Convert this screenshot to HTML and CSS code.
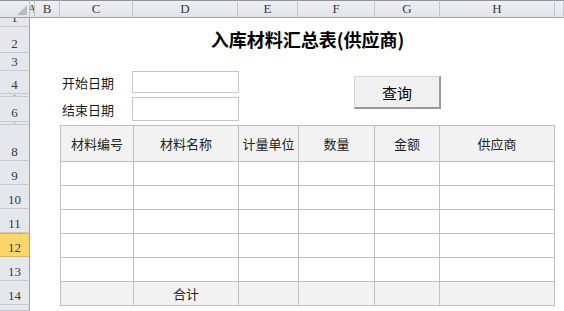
FILE: index.html
```html
<!DOCTYPE html>
<html lang="zh-CN">
<head>
    <meta charset="UTF-8">
    <meta name="viewport" content="width=device-width, initial-scale=1.0">
    <title>入库材料汇总表(供应商)</title>
    <link rel="stylesheet" href="styles.css">
</head>
<body>
    <div class="sheet">
        <div class="corner">
            <svg width="10" height="10" viewBox="0 0 10 10"><polygon points="10,0 10,10 0,10"/></svg>
        </div>
        <div class="col-head">A</div>
        <div class="col-head">B</div>
        <div class="col-head">C</div>
        <div class="col-head">D</div>
        <div class="col-head">E</div>
        <div class="col-head">F</div>
        <div class="col-head">G</div>
        <div class="col-head">H</div>
        <div class="col-head"></div>

        <div class="row-head">1</div>
        <div class="row-head">2</div>
        <div class="row-head">3</div>
        <div class="row-head">4</div>
        <div class="row-head tiny">5</div>
        <div class="row-head">6</div>
        <div class="row-head tiny">7</div>
        <div class="row-head">8</div>
        <div class="row-head">9</div>
        <div class="row-head">10</div>
        <div class="row-head">11</div>
        <div class="row-head selected">12</div>
        <div class="row-head">13</div>
        <div class="row-head">14</div>
        <div class="row-head"></div>

        <h1 class="title">入库材料汇总表(供应商)</h1>

        <label class="field-label start-label" for="start-date">开始日期</label>
        <input class="date-input start-input" id="start-date" type="text">
        <label class="field-label end-label" for="end-date">结束日期</label>
        <input class="date-input end-input" id="end-date" type="text">

        <button class="query-btn">查询</button>

        <div class="report">
            <div class="cell head">材料编号</div>
            <div class="cell head">材料名称</div>
            <div class="cell head">计量单位</div>
            <div class="cell head">数量</div>
            <div class="cell head">金额</div>
            <div class="cell head">供应商</div>

            <div class="cell"></div><div class="cell"></div><div class="cell"></div><div class="cell"></div><div class="cell"></div><div class="cell"></div>
            <div class="cell"></div><div class="cell"></div><div class="cell"></div><div class="cell"></div><div class="cell"></div><div class="cell"></div>
            <div class="cell"></div><div class="cell"></div><div class="cell"></div><div class="cell"></div><div class="cell"></div><div class="cell"></div>
            <div class="cell"></div><div class="cell"></div><div class="cell"></div><div class="cell"></div><div class="cell"></div><div class="cell"></div>
            <div class="cell"></div><div class="cell"></div><div class="cell"></div><div class="cell"></div><div class="cell"></div><div class="cell"></div>

            <div class="cell foot"></div>
            <div class="cell foot">合计</div>
            <div class="cell foot"></div>
            <div class="cell foot"></div>
            <div class="cell foot"></div>
            <div class="cell foot"></div>
        </div>
    </div>
</body>
</html>
```

FILE: styles.css
```css
body {
    margin: 0;
    padding: 0;
    background: #fff;
    font-family: "Noto Sans CJK SC", sans-serif;
    color: #1a1a1a;
    overflow: hidden;
}

.sheet {
    display: grid;
    width: 564px;
    height: 311px;
    grid-template-columns: 30px 5px 25px 73px 105px 60px 77px 65px 115px 1fr;
    grid-template-rows: 18px 9px 26px 18px 23px 3px 25px 3px 36px repeat(6, 24px) 1fr;
    overflow: hidden;
}

/* headers */
.corner {
    grid-column: 1;
    grid-row: 1;
    display: flex;
    justify-content: flex-end;
    align-items: flex-end;
    padding: 0 2px 2px 0;
    box-sizing: border-box;
    background: linear-gradient(#eef0f3, #e1e4e9);
    border-top: 1px solid #8f9499;
    border-right: 1px solid #c3c7cc;
    border-bottom: 1px solid #9ea4ab;
}

.corner svg polygon {
    fill: #b9bdc3;
}

.col-head {
    grid-row: 1;
    box-sizing: border-box;
    background: linear-gradient(#eef0f3, #e1e4e9);
    border-top: 1px solid #8f9499;
    border-right: 1px solid #c3c7cc;
    border-bottom: 1px solid #9ea4ab;
    font-family: "Liberation Serif", serif;
    font-size: 13px;
    color: #3a3a3a;
    display: flex;
    justify-content: center;
    align-items: center;
    overflow: hidden;
    white-space: nowrap;
}

.row-head {
    grid-column: 1;
    box-sizing: border-box;
    background: #e4e7eb;
    border-right: 1px solid #9ea4ab;
    border-bottom: 1px solid #c6cacf;
    font-family: "Liberation Serif", serif;
    font-size: 13px;
    line-height: 14px;
    color: #3a3a3a;
    display: flex;
    justify-content: center;
    align-items: flex-end;
    padding-bottom: 1px;
    overflow: hidden;
}

.row-head.tiny {
    font-size: 4px;
    line-height: 2px;
    padding-bottom: 0;
}

.row-head.selected {
    background: #fbd66a;
    border-bottom-color: #e2b445;
    box-shadow: inset 0 1px 0 #e2b445;
}

/* form area */
.title {
    grid-column: 4 / 10;
    grid-row: 3;
    margin: 0;
    font-size: 18px;
    font-weight: bold;
    color: #000;
    text-align: center;
    line-height: 22px;
    align-self: start;
    padding-top: 1px;
}

.field-label {
    grid-column: 4;
    padding-left: 2px;
    font-size: 13px;
    display: flex;
    align-items: center;
}

.start-label { grid-row: 5; }
.end-label { grid-row: 7; }

.date-input {
    grid-column: 5;
    margin: 0 0 1px -1px;
    padding: 0;
    box-sizing: border-box;
    width: 107px;
    border: 1px solid #c6c6c6;
    background: #fff;
}

.start-input { grid-row: 5; }
.end-input { grid-row: 7; }

.query-btn {
    grid-column: 7 / 9;
    grid-row: 5 / 8;
    justify-self: end;
    align-self: start;
    margin: 5px -1px 0 0;
    width: 87px;
    height: 33px;
    padding: 0;
    box-sizing: border-box;
    background: #f0f0f0;
    border: 1px solid #d4d4d4;
    border-right: 2px solid #9a9a9a;
    border-bottom: 2px solid #9a9a9a;
    font-family: "Noto Sans CJK SC", sans-serif;
    font-size: 15px;
    color: #000;
}

/* report table */
.report {
    grid-column: 4 / 10;
    grid-row: 9 / 17;
    align-self: start;
    display: grid;
    grid-template-columns: 73px 105px 60px 76px 65px 115px;
    grid-template-rows: 36px repeat(6, 24px);
    border-top: 1px solid #c0c0c0;
    border-left: 1px solid #c0c0c0;
    width: 495px;
    box-sizing: border-box;
}

.cell {
    box-sizing: border-box;
    border-right: 1px solid #c0c0c0;
    border-bottom: 1px solid #c0c0c0;
    font-size: 13px;
    display: flex;
    justify-content: center;
    align-items: center;
    white-space: nowrap;
}

.cell.head,
.cell.foot {
    background: #f2f2f2;
    color: #222;
}
```
